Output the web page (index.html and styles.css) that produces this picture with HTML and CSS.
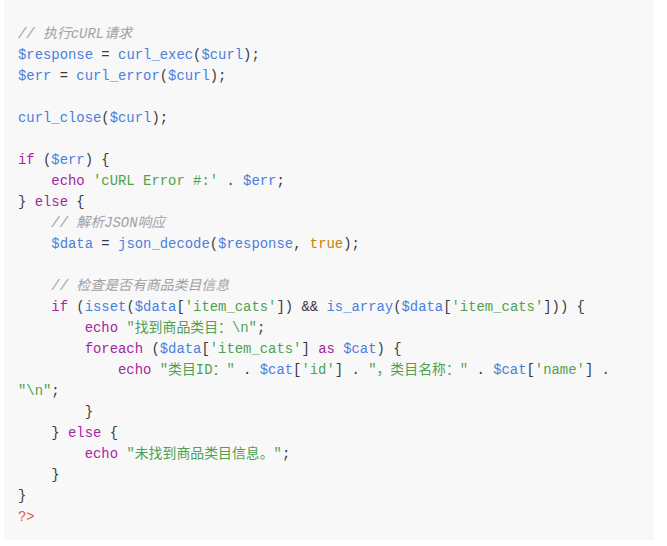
FILE: index.html
```html
<!DOCTYPE html>
<html lang="zh">
<head>
<meta charset="utf-8">
<link rel="stylesheet" href="styles.css">
</head>
<body>
<pre class="code"><code><span class="c">// 执行cURL请求</span>
<span class="v">$response</span> = <span class="f">curl_exec</span>(<span class="v">$curl</span>);
<span class="v">$err</span> = <span class="f">curl_error</span>(<span class="v">$curl</span>);

<span class="f">curl_close</span>(<span class="v">$curl</span>);

<span class="k">if</span> (<span class="v">$err</span>) {
    <span class="k">echo</span> <span class="s">'cURL Error #:'</span> . <span class="v">$err</span>;
} <span class="k">else</span> {
    <span class="c">// 解析JSON响应</span>
    <span class="v">$data</span> = <span class="f">json_decode</span>(<span class="v">$response</span>, <span class="l">true</span>);

    <span class="c">// 检查是否有商品类目信息</span>
    <span class="k">if</span> (<span class="f">isset</span>(<span class="v">$data</span>[<span class="s">'item_cats'</span>]) &amp;&amp; <span class="f">is_array</span>(<span class="v">$data</span>[<span class="s">'item_cats'</span>])) {
        <span class="k">echo</span> <span class="s">"找到商品类目：\n"</span>;
        <span class="k">foreach</span> (<span class="v">$data</span>[<span class="s">'item_cats'</span>] <span class="k">as</span> <span class="v">$cat</span>) {
            <span class="k">echo</span> <span class="s">"类目ID："</span> . <span class="v">$cat</span>[<span class="s">'id'</span>] . <span class="s">"，类目名称："</span> . <span class="v">$cat</span>[<span class="s">'name'</span>] .
<span class="s">"\n"</span>;
        }
    } <span class="k">else</span> {
        <span class="k">echo</span> <span class="s">"未找到商品类目信息。"</span>;
    }
}
<span class="m">?&gt;</span></code></pre>
</body>
</html>
```
FILE: styles.css
```css
html, body {
  margin: 0;
  padding: 0;
  background: #ffffff;
}
body {
  padding: 0 13px 0 4px;
}
.code {
  margin: 0;
  width: 650px;
  box-sizing: border-box;
  height: 540px;
  padding: 24px 14px 0 14px;
  background: #f8f8f8;
  font-family: "Liberation Mono", "Noto Sans CJK SC", monospace;
  font-size: 13.9px;
  line-height: 21px;
  color: #383a42;
  white-space: pre;
  overflow: hidden;
}
.code code {
  font-family: inherit;
}
.c {
  color: #a0a1a7;
  font-style: italic;
}
.v, .f {
  color: #4a7fdc;
}
.k {
  color: #a626a4;
}
.s {
  color: #50a14f;
}
.l {
  color: #c18401;
}
.m {
  color: #e45649;
}
```
